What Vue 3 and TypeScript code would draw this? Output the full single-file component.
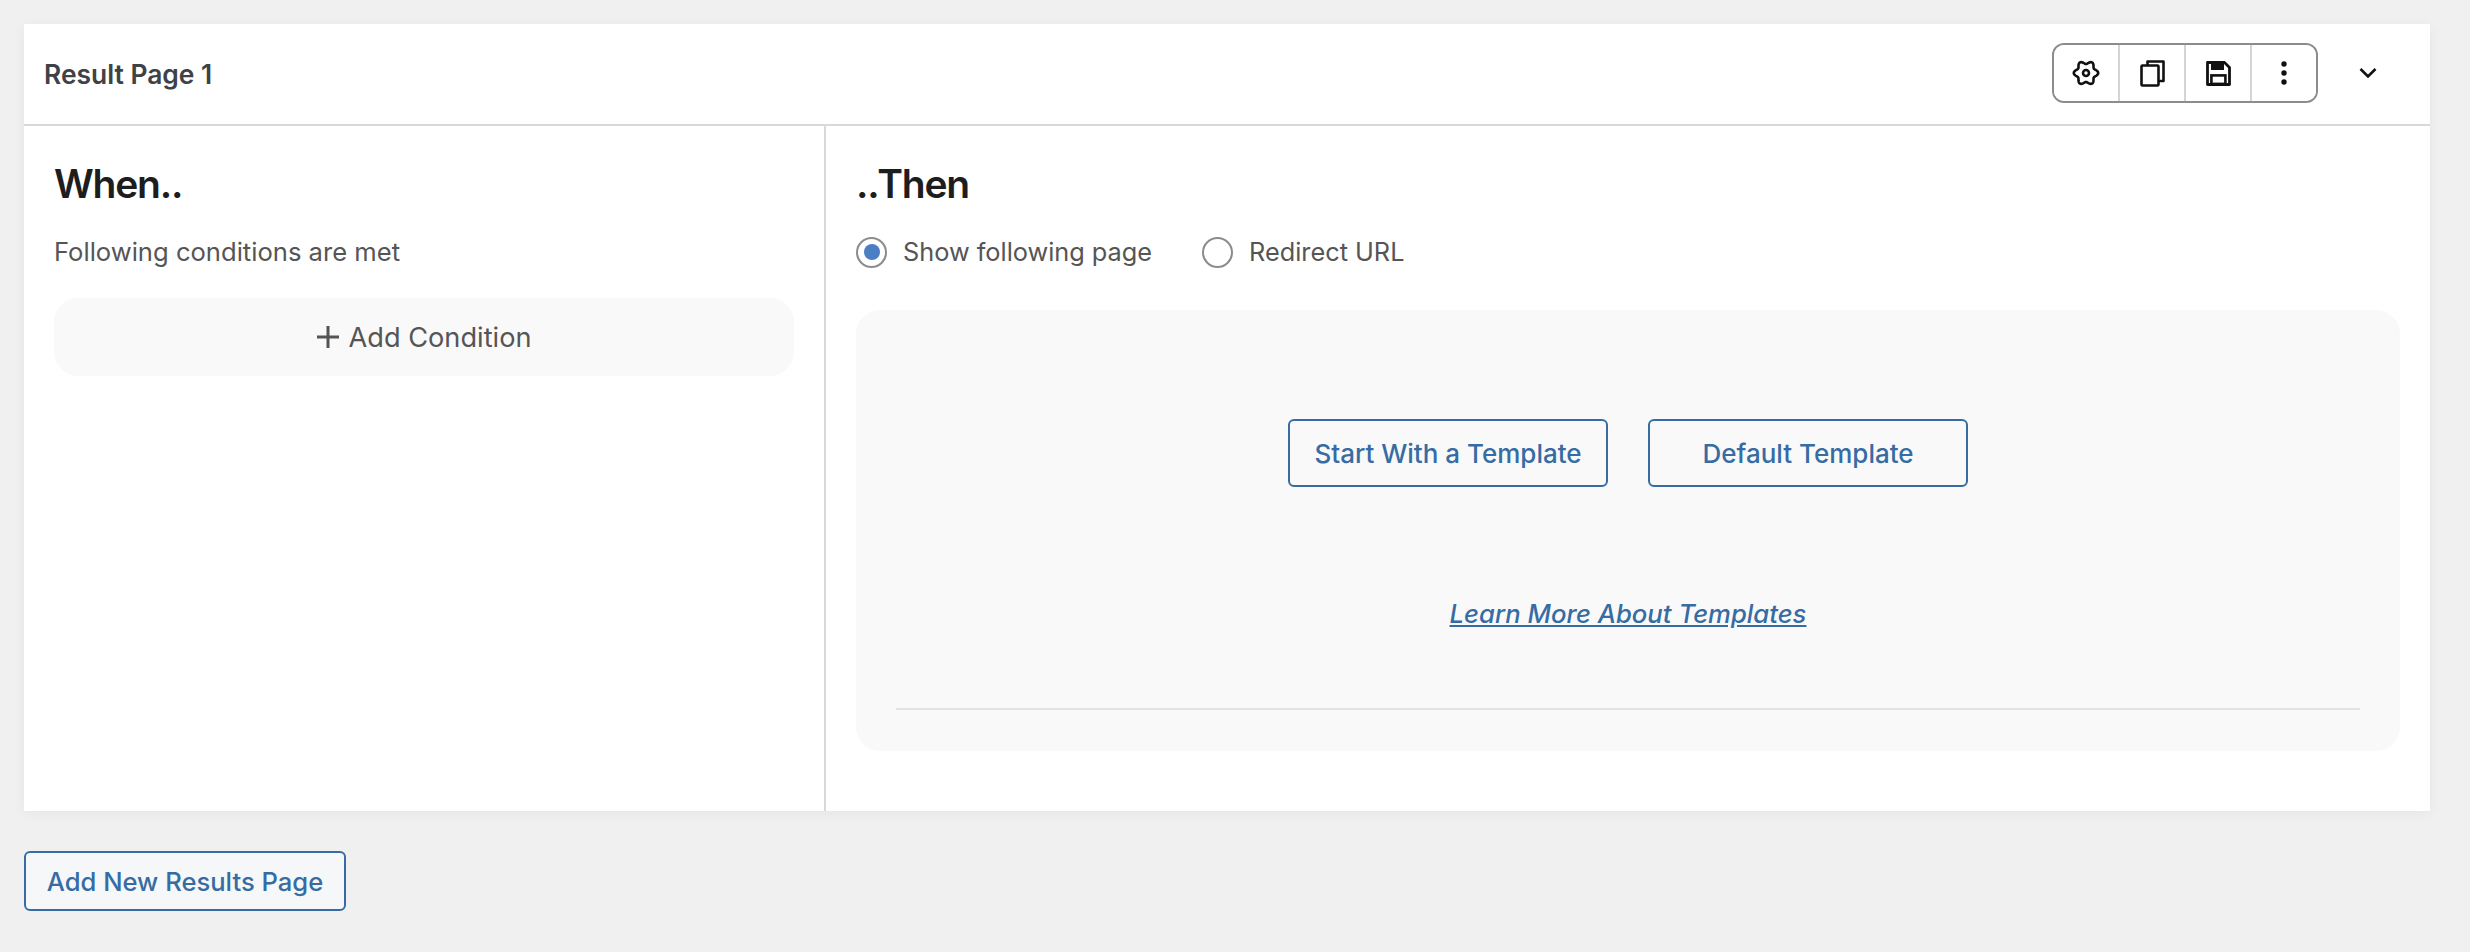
<script setup lang="ts">
const gearPath: string = (() => {
  const pts: string[] = [];
  for (let i = 0; i < 120; i++) {
    const t = (i / 120) * Math.PI * 2;
    const r = 10.6 + 1.6 * Math.cos(6 * t);
    pts.push(`${(14 + r * Math.cos(t)).toFixed(2)} ${(14 + r * Math.sin(t)).toFixed(2)}`);
  }
  return `M${pts.join("L")}Z`;
})();
</script>

<template>
  <main class="page">
    <section class="card">
      <header class="card-head">
        <h2 class="card-title">Result Page 1</h2>
        <div class="tools">
          <div class="tool-group">
            <button class="tool" type="button" aria-label="Settings">
              <svg width="28" height="28" viewBox="0 0 28 28" fill="none" stroke="#111" stroke-width="2.6" stroke-linejoin="round">
                <path :d="gearPath" />
                <circle cx="14" cy="14" r="3" />
              </svg>
            </button>
            <button class="tool" type="button" aria-label="Duplicate">
              <svg width="25" height="27" viewBox="0 0 25 27" fill="none" stroke="#111" stroke-width="2.6" stroke-linejoin="round">
                <path d="M7.5 5.5V1.5h16v19.5H19" />
                <rect x="1.5" y="5.5" width="17" height="20" rx="1" />
              </svg>
            </button>
            <button class="tool" type="button" aria-label="Save">
              <svg width="25" height="25" viewBox="0 0 25 25" fill="none">
                <path d="M1.5 1.5h17l5 5v17h-22z" stroke="#111" stroke-width="2.8" stroke-linejoin="round" />
                <rect x="5" y="2" width="13" height="7" fill="#111" />
                <rect x="5.4" y="14.4" width="14" height="8.5" stroke="#111" stroke-width="2.6" />
              </svg>
            </button>
            <button class="tool" type="button" aria-label="More">
              <svg width="8" height="26" viewBox="0 0 8 26" fill="#111">
                <circle cx="4" cy="4" r="2.7" />
                <circle cx="4" cy="13" r="2.7" />
                <circle cx="4" cy="22" r="2.7" />
              </svg>
            </button>
          </div>
          <button class="collapse" type="button" aria-label="Collapse">
            <svg width="18" height="12" viewBox="0 0 18 12" fill="none" stroke="#111" stroke-width="2.6">
              <path d="M1.5 2l7.5 7.5L16.5 2" />
            </svg>
          </button>
        </div>
      </header>

      <div class="card-body">
        <div class="col-when">
          <h3 class="col-title">When..</h3>
          <p class="col-sub">Following conditions are met</p>
          <button class="add-condition" type="button">
            <svg class="plus" width="22" height="22" viewBox="0 0 22 22" fill="#555">
              <rect x="0" y="9.5" width="22" height="3" />
              <rect x="9.5" y="0" width="3" height="22" />
            </svg>
            <span>Add Condition</span>
          </button>
        </div>

        <div class="col-then">
          <h3 class="col-title">..Then</h3>
          <div class="radios">
            <label class="radio">
              <span class="dot is-on"></span>
              <span>Show following page</span>
            </label>
            <label class="radio">
              <span class="dot"></span>
              <span>Redirect URL</span>
            </label>
          </div>
          <div class="panel">
            <div class="panel-actions">
              <button class="btn btn-wide" type="button">Start With a Template</button>
              <button class="btn btn-wide" type="button">Default Template</button>
            </div>
            <a class="learn" href="#">Learn More About Templates</a>
            <hr class="panel-rule" />
          </div>
        </div>
      </div>
    </section>

    <button class="btn btn-add" type="button">Add New Results Page</button>
  </main>
</template>

<style>
html,
body {
  margin: 0;
  background: #f0f0f0;
}
</style>

<style scoped>
.page {
  box-sizing: border-box;
  width: 2470px;
  height: 952px;
  padding: 24px 40px 0 24px;
  background: #f0f0f0;
  overflow: hidden;
  font-family: Inter, "Liberation Sans", sans-serif;
  color: #555;
}
.card {
  height: 787px;
  display: flex;
  flex-direction: column;
  background: #fff;
  box-shadow: 0 2px 12px rgba(0, 0, 0, 0.05);
}
.card-head {
  flex: none;
  box-sizing: border-box;
  height: 102px;
  display: flex;
  align-items: center;
  justify-content: space-between;
  padding: 0 0 2px 20px;
  border-bottom: 2px solid #dcd8da;
}
.card-title {
  margin: 0;
  font-size: 26.4px;
  line-height: 32px;
  padding-top: 2px;
  font-weight: 600;
  color: #3f4245;
}
.tools {
  display: flex;
  align-items: center;
}
.tool-group {
  display: flex;
  box-sizing: border-box;
  height: 60px;
  border: 2px solid #8c8c8c;
  border-radius: 12px;
  overflow: hidden;
}
.tool {
  box-sizing: content-box;
  width: 64px;
  padding: 0;
  display: flex;
  align-items: center;
  justify-content: center;
  background: #fff;
  border: 0;
  border-right: 2px solid #d4d4d4;
}
.tool:last-child {
  border-right: 0;
}
.collapse {
  width: 100px;
  height: 60px;
  margin-right: 12px;
  padding: 0;
  display: flex;
  align-items: center;
  justify-content: center;
  background: none;
  border: 0;
}
.card-body {
  flex: 1;
  display: flex;
  min-height: 0;
}
.col-when {
  flex: none;
  box-sizing: border-box;
  width: 802px;
  padding: 35px 30px 0;
  border-right: 2px solid #dcd8da;
}
.col-then {
  flex: 1;
  padding: 35px 30px 0;
}
.col-title {
  margin: 0;
  font-size: 39px;
  line-height: 46px;
  font-weight: 600;
  letter-spacing: -1.2px;
  color: #1d1d1d;
}
.col-sub {
  margin: 29px 0 0;
  font-size: 25.6px;
  line-height: 32px;
}
.add-condition {
  box-sizing: border-box;
  width: 100%;
  height: 78px;
  margin-top: 30px;
  display: flex;
  align-items: center;
  justify-content: center;
  gap: 10px;
  background: #f9f9f9;
  border: 0;
  border-radius: 24px;
  font: inherit;
  font-size: 27.2px;
  color: #555;
}
.radios {
  display: flex;
  gap: 50px;
  margin-top: 29px;
}
.radio {
  display: flex;
  align-items: center;
  gap: 16px;
  font-size: 25.3px;
  line-height: 32px;
}
.dot {
  box-sizing: border-box;
  width: 31px;
  height: 31px;
  border: 2px solid #8c8c8c;
  border-radius: 50%;
  background: #fff;
  display: flex;
  align-items: center;
  justify-content: center;
}
.dot.is-on::before {
  content: "";
  width: 16px;
  height: 16px;
  border-radius: 50%;
  background: #4a7fc4;
}
.panel {
  box-sizing: border-box;
  height: 441px;
  margin-top: 42px;
  padding: 109px 40px 0;
  display: flex;
  flex-direction: column;
  align-items: center;
  background: #f9f9f9;
  border-radius: 24px;
}
.panel-actions {
  display: flex;
  gap: 40px;
}
.btn {
  box-sizing: border-box;
  height: 68px;
  padding: 0;
  background: #f5f7f9;
  border: 2px solid #366ca3;
  border-radius: 6px;
  font: inherit;
  font-size: 26px;
  font-weight: 500;
  color: #366ca3;
}
.btn-wide {
  width: 320px;
  background: transparent;
}
.learn {
  margin-top: 111px;
  font-size: 25.7px;
  line-height: 32px;
  font-style: italic;
  font-weight: 500;
  color: #366ca3;
  text-decoration: underline;
}
.panel-rule {
  align-self: stretch;
  height: 2px;
  margin: 78px 0 0;
  background: #e2e2e2;
  border: 0;
}
.btn-add {
  display: block;
  width: 322px;
  height: 60px;
  margin-top: 40px;
  font-size: 25.6px;
}
</style>
